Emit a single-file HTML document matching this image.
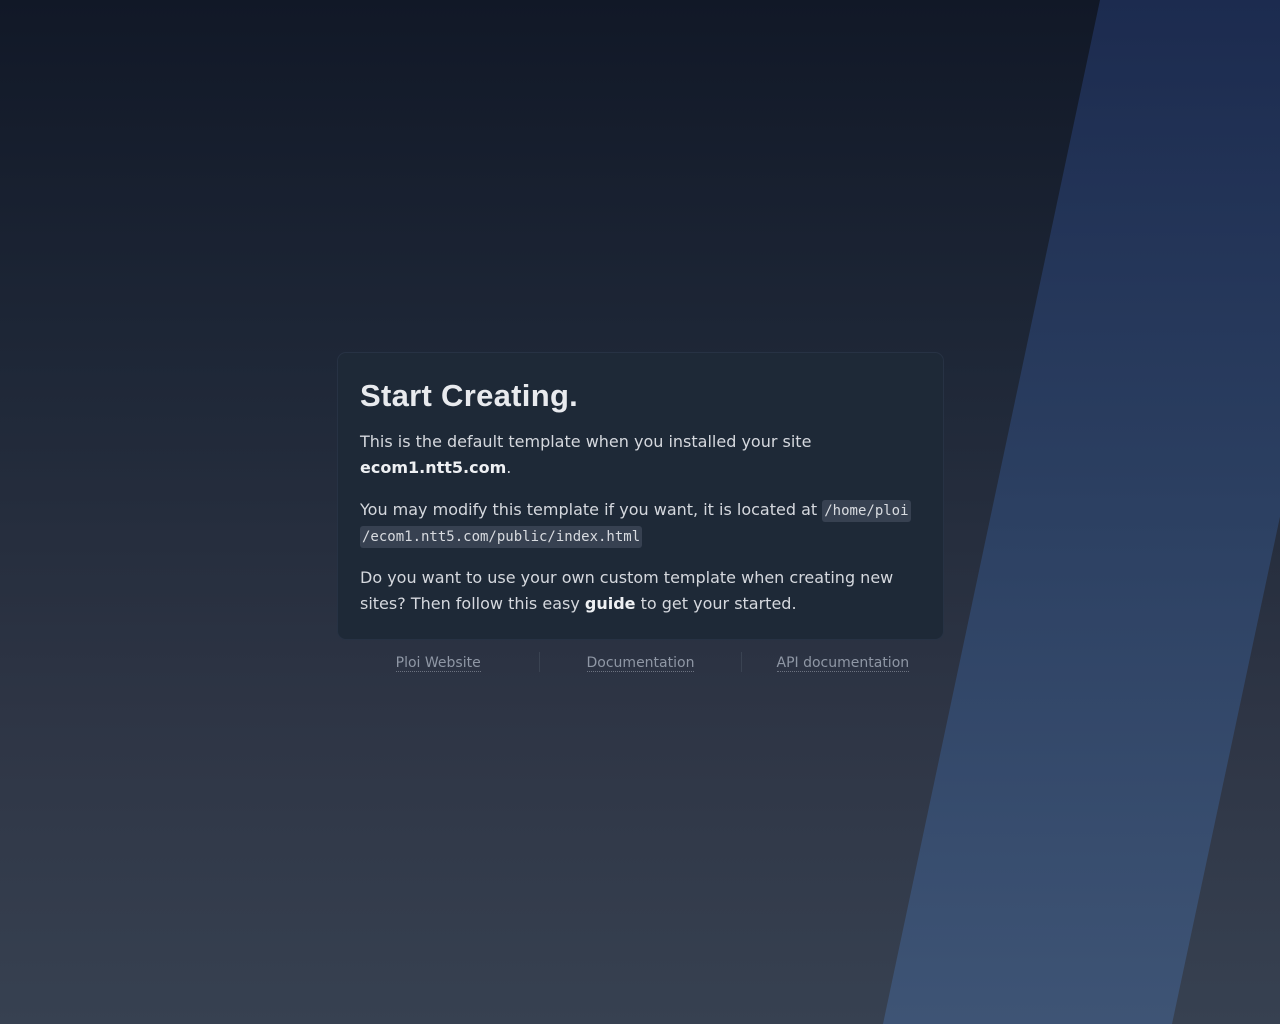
<!DOCTYPE html>
<html><head><meta charset="utf-8"><style>
html,body{margin:0;height:100%;}
body{width:1280px;height:1024px;position:relative;overflow:hidden;background:linear-gradient(180deg,#111827 0%,#1e2737 35%,#2e3545 70%,#374151 100%);font-family:"DejaVu Sans",sans-serif;}
svg.bg{position:absolute;left:0;top:0;}
.card{position:absolute;left:337px;top:352px;width:607px;height:288px;box-sizing:border-box;background:#1e2937;border:1px solid #273244;border-radius:9px;padding:24px 22px;}
h1{margin:0 0 14px;font-family:"Liberation Sans",sans-serif;font-weight:bold;font-size:31px;color:#e8eaee;letter-spacing:0.3px;line-height:38px;}
p{margin:0 0 16px;color:#d5d8de;font-size:16px;line-height:26px;}
b{color:#eef0f3;}
code{font-family:"DejaVu Sans Mono",monospace;font-size:14px;line-height:14px;background:#374151;color:#d8dbe0;padding:3px 2px;border-radius:3px;}
.links{position:absolute;top:653px;left:337px;width:607px;display:flex;}
.links div{flex:1;text-align:center;font-size:14px;color:#8f97a5;line-height:20px;}
.links div span{border-bottom:1px dotted #6b7280;}
.sep{position:absolute;top:652px;width:1px;height:20px;background:#3a4352;}
</style></head><body>
<svg class="bg" width="1280" height="1024"><defs><linearGradient id="g" x1="0" y1="0" x2="0" y2="1"><stop offset="0" stop-color="#1c2b4f"/><stop offset="0.5" stop-color="#2c4062"/><stop offset="1" stop-color="#3e5475"/></linearGradient></defs>
<polygon points="1100,0 1390,0 1172,1024 883,1024" fill="url(#g)"/></svg>
<div class="card">
<h1>Start Creating.</h1>
<p>This is the default template when you installed your site <b>ecom1.ntt5.com</b>.</p>
<p>You may modify this template if you want, it is located at <code>/home/ploi</code><br><code>/ecom1.ntt5.com/public/index.html</code></p>
<p>Do you want to use your own custom template when creating new sites? Then follow this easy <b>guide</b> to get your started.</p>
</div>
<div class="links"><div><span>Ploi Website</span></div><div><span>Documentation</span></div><div><span>API documentation</span></div></div>
<div class="sep" style="left:539px"></div><div class="sep" style="left:741px"></div>
</body></html>
